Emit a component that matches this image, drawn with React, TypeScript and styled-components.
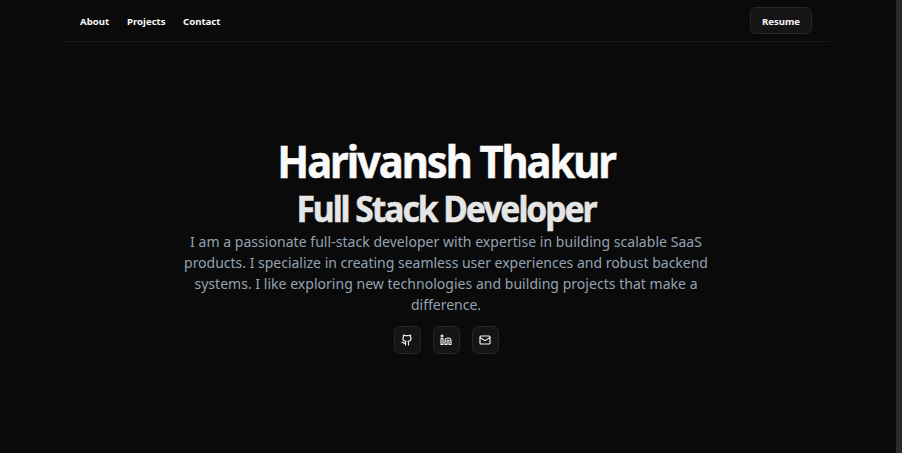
import React from "react";
import styled, { createGlobalStyle } from "styled-components";
import { Github, Linkedin, Mail } from "lucide-react";

const GlobalStyle = createGlobalStyle`
  * { box-sizing: border-box; }
  html, body { margin: 0; background: #0a0a0a; overflow: hidden; }
  body { font-family: "Segoe UI", "Noto Sans", "Open Sans", sans-serif; color: #fafafa; }
`;

const Page = styled.div`
  display: grid;
  grid-template-columns: 1fr 6px;
  width: 100vw;
  height: 100vh;
`;

const Scrollbar = styled.div`
  background: #2c2c2c;
`;

const Content = styled.div`
  display: flex;
  flex-direction: column;
  width: 768px;
  height: 453px;
  margin-left: 62px;
`;

const Nav = styled.nav`
  display: flex;
  align-items: center;
  justify-content: space-between;
  height: 42px;
  padding: 0 18px;
  border-bottom: 1px solid #191919;
`;

const Links = styled.div`
  display: flex;
  gap: 18px;
  padding-top: 2px;
`;

const NavLink = styled.a<{ $width: number }>`
  width: ${(p) => p.$width}px;
  font-size: 9.6px;
  line-height: 15px;
  font-weight: 700;
  white-space: nowrap;
`;

const Button = styled.a`
  display: flex;
  align-items: center;
  justify-content: center;
  border: 1px solid #262626;
  border-radius: 6px;
  background: #151515;
  color: #f5f5f5;
`;

const ResumeButton = styled(Button)`
  width: 62px;
  height: 27px;
  padding-top: 2px;
  font-size: 9.6px;
  font-weight: 700;
`;

const IconButton = styled(Button)`
  width: 27px;
  height: 28px;
`;

const Hero = styled.main`
  display: flex;
  flex-direction: column;
  align-items: center;
  padding-top: 95px;
`;

const Title = styled.h1`
  margin: 0;
  font-size: 44.5px;
  line-height: 48px;
  font-weight: 700;
  letter-spacing: -2.2px;
  white-space: nowrap;
  transform: scaleX(0.937);
  -webkit-text-stroke: 0.5px #fafafa;
`;

const Subtitle = styled.h2`
  margin: 1px 0 0;
  color: #e5e5e5;
  font-size: 36px;
  line-height: 46px;
  font-weight: 700;
  letter-spacing: -2.2px;
  white-space: nowrap;
  transform: scaleX(0.935);
  -webkit-text-stroke: 0.5px #e5e5e5;
`;

const Bio = styled.p`
  margin: -1px 0 0;
  color: #94a3b3;
  font-size: 14px;
  line-height: 21px;
  text-align: center;
`;

const Line = styled.span<{ $spacing: number }>`
  display: block;
  white-space: nowrap;
  letter-spacing: ${(p) => p.$spacing}px;
`;

const Socials = styled.div`
  display: flex;
  gap: 12px;
  margin-top: 11px;
`;

export default function App() {
  return (
    <>
      <GlobalStyle />
      <Page>
        <Content>
          <Nav>
            <Links>
              <NavLink $width={29}>About</NavLink>
              <NavLink $width={38}>Projects</NavLink>
              <NavLink $width={38}>Contact</NavLink>
            </Links>
            <ResumeButton>Resume</ResumeButton>
          </Nav>
          <Hero>
            <Title>Harivansh Thakur</Title>
            <Subtitle>Full Stack Developer</Subtitle>
            <Bio>
              <Line $spacing={0.04}>I am a passionate full-stack developer with expertise in building scalable SaaS</Line>
              <Line $spacing={-0.01}>products. I specialize in creating seamless user experiences and robust backend</Line>
              <Line $spacing={0.03}>systems. I like exploring new technologies and building projects that make a</Line>
              <Line $spacing={0}>difference.</Line>
            </Bio>
            <Socials>
              <IconButton><Github size={12} strokeWidth={2.3} /></IconButton>
              <IconButton><Linkedin size={12} strokeWidth={2.3} /></IconButton>
              <IconButton><Mail size={12} strokeWidth={2.3} /></IconButton>
            </Socials>
          </Hero>
        </Content>
        <Scrollbar />
      </Page>
    </>
  );
}
